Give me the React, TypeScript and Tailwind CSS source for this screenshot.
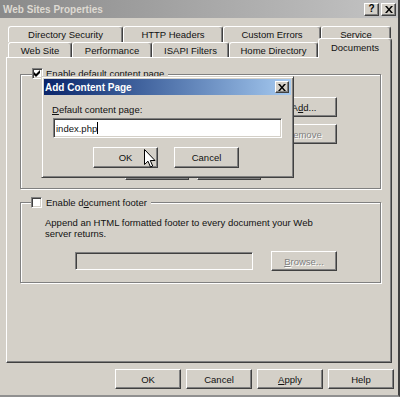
import React from 'react';

const raised =
  'bg-[#d4d0c8] border border-t-white border-l-white border-r-[#404040] border-b-[#404040] shadow-[inset_-1px_-1px_0_#808080]';
const sunken =
  'border border-t-[#808080] border-l-[#808080] border-r-white border-b-white shadow-[inset_1px_1px_0_#404040,inset_-1px_-1px_0_#d4d0c8]';
const dim = 'text-[#808080] [text-shadow:1px_1px_0_#fff]';

function Button({ className, children }: { className: string; children?: React.ReactNode }) {
  return <div className={`flex items-center justify-center ${raised} ${className}`}>{children}</div>;
}

function CheckBox({ checked }: { checked?: boolean }) {
  return (
    <div className={`w-[11px] h-[11px] bg-white flex items-center justify-center ${sunken}`}>
      {checked && (
        <svg width="7" height="7" viewBox="0 0 7 7">
          <path d="M0 2 L2 4 L6 0 L6 3 L2 7 L0 5 Z" fill="#000" />
        </svg>
      )}
    </div>
  );
}

function Tab({ label, className, selected }: { label: string; className: string; selected?: boolean }) {
  return (
    <div
      className={`${className} flex items-center justify-center bg-[#d4d0c8] border-l border-t border-r border-l-white border-t-white border-r-[#404040] rounded-tl-[3px] rounded-tr-[3px] shadow-[inset_-1px_0_0_#808080] ${
        selected ? 'relative h-[20px] -mb-[1px] pb-[2px]' : 'h-full'
      }`}
    >
      {label}
    </div>
  );
}

function CapButton({ children }: { children: React.ReactNode }) {
  return (
    <div className={`w-[15px] h-[13px] flex items-center justify-center ${raised}`}>{children}</div>
  );
}

function XGlyph() {
  return (
    <svg width="8" height="7" viewBox="0 0 8 7">
      <path d="M0 0 L2 0 L4 2.5 L6 0 L8 0 L5 3.5 L8 7 L6 7 L4 4.5 L2 7 L0 7 L3 3.5 Z" fill="#000" />
    </svg>
  );
}

function Group({
  className,
  legendClass,
  legend,
  children,
}: {
  className: string;
  legendClass: string;
  legend: React.ReactNode;
  children?: React.ReactNode;
}) {
  return (
    <div
      className={`relative border border-[#808080] shadow-[1px_1px_0_#fff,inset_1px_1px_0_#fff] ${className}`}
    >
      <div className={`absolute flex items-center bg-[#d4d0c8] pr-[4px] ${legendClass}`}>{legend}</div>
      {children}
    </div>
  );
}

export default function App() {
  return (
    <div className="relative w-[400px] h-[397px] overflow-hidden bg-[#d4d0c8] text-[#111] text-[9.5px] leading-[11px] font-['Liberation_Sans',Arial,sans-serif] border-r-2 border-b-2 border-r-[#404040] border-b-[#909090]">
      {/* title bar (inactive) */}
      <div className="h-[18px] flex items-center bg-linear-to-r from-[#8a8a8a] to-[#c4c4c4] pl-[3px] pr-[2px]">
        <span className="flex-1 font-bold text-[10px] text-[#dedad2]">Web Sites Properties</span>
        <div className="flex gap-[2px]">
          <CapButton>
            <span className="font-bold text-[10px] leading-none text-black">?</span>
          </CapButton>
          <CapButton>
            <XGlyph />
          </CapButton>
        </div>
      </div>

      {/* tabs */}
      <div className="mt-[8px] ml-[8px] flex h-[16px]">
        <Tab label="Directory Security" className="w-[115px]" />
        <Tab label="HTTP Headers" className="w-[100px]" />
        <Tab label="Custom Errors" className="w-[98px]" />
        <Tab label="Service" className="w-[70px]" />
      </div>
      <div className="ml-[8px] flex items-end h-[15px]">
        <Tab label="Web Site" className="w-[64px]" />
        <Tab label="Performance" className="w-[80px]" />
        <Tab label="ISAPI Filters" className="w-[77px]" />
        <Tab label="Home Directory" className="w-[89px]" />
        <Tab label="Documents" className="w-[74px]" selected />
      </div>

      {/* tab panel */}
      <div className="ml-[6px] w-[386px] h-[306px] border border-t-white border-l-white border-r-[#404040] border-b-[#404040] shadow-[inset_-1px_-1px_0_#808080] pt-[16px] pl-[13px]">
        <Group
          className="w-[361px] h-[115px] pt-[22px] pl-[24px]"
          legendClass="left-[11px] -top-[7px] gap-[3px]"
          legend={
            <>
              <CheckBox checked />
              <span>
                <u>E</u>nable default content page
              </span>
            </>
          }
        >
          <div className="flex">
            <div className={`w-[216px] h-[56px] bg-white ${sunken}`} />
            <div className="ml-[10px] flex flex-col gap-[7px]">
              <Button className="w-[66px] h-[20px]">
                <span>
                  A<u>d</u>d...
                </span>
              </Button>
              <Button className={`w-[66px] h-[20px] ${dim}`}>Remove</Button>
            </div>
          </div>
          <div className="mt-[7px] ml-[80px] flex gap-[8px]">
            <Button className={`w-[64px] h-[20px] ${dim}`}>Move Up</Button>
            <Button className={`w-[64px] h-[20px] ${dim}`}>Move Down</Button>
          </div>
        </Group>

        <Group
          className="mt-[13px] w-[361px] h-[81px] pt-[14px]"
          legendClass="left-[10px] -top-[6px] gap-[4px]"
          legend={
            <>
              <CheckBox />
              <span>
                Enable d<u>o</u>cument footer
              </span>
            </>
          }
        >
          <div className="pl-[24px]">
            Append an HTML formatted footer to every document your Web
            <br />
            server returns.
          </div>
          <div className="mt-[12px] pl-[54px] flex items-center h-[20px] gap-[18px]">
            <div className={`w-[178px] h-[18px] bg-[#d4d0c8] ${sunken}`} />
            <Button className={`w-[66px] h-[20px] ${dim}`}>
              <span>
                <u>B</u>rowse...
              </span>
            </Button>
          </div>
        </Group>
      </div>

      {/* dialog buttons */}
      <div className="mt-[6px] ml-[115px] flex gap-[5px]">
        <Button className="w-[66px] h-[20px]">OK</Button>
        <Button className="w-[66px] h-[20px]">Cancel</Button>
        <Button className="w-[66px] h-[20px]">
          <span>
            <u>A</u>pply
          </span>
        </Button>
        <Button className="w-[66px] h-[20px]">Help</Button>
      </div>

      {/* modal: Add Content Page */}
      <div className="absolute left-[41px] top-[76px] w-[253px] h-[102px] bg-[#d4d0c8] p-[2px] border border-t-[#d4d0c8] border-l-[#d4d0c8] border-r-[#404040] border-b-[#404040] shadow-[inset_1px_1px_0_#fff,inset_-1px_-1px_0_#808080]">
        <div className="h-[16px] flex items-center bg-linear-to-r from-[#0a246a] to-[#a6caf0] pl-[1px] pr-[2px]">
          <span className="flex-1 font-bold text-[10px] text-white">Add Content Page</span>
          <div className={`w-[14px] h-[12px] flex items-center justify-center ${raised}`}>
            <XGlyph />
          </div>
        </div>
        <div className="pl-[8px] pt-[9px]">
          <div>
            <u>D</u>efault content page:
          </div>
          <div className={`mt-[3px] ml-[1px] w-[229px] h-[20px] bg-white flex items-center pl-[2px] ${sunken}`}>
            <span>index.php</span>
            <span className="w-[1px] h-[12px] bg-black" />
          </div>
          <div className="mt-[9px] ml-[41px] flex gap-[16px]">
            <Button className="w-[65px] h-[21px]">OK</Button>
            <Button className="w-[65px] h-[21px]">Cancel</Button>
          </div>
        </div>
      </div>

      {/* mouse pointer */}
      <svg className="absolute left-[144px] top-[149px]" width="12" height="19" viewBox="0 0 12 19">
        <path
          d="M0.5 0.5 L0.5 15.5 L4 12.2 L6.5 18 L8.7 17 L6.3 11.5 L11 11.5 Z"
          fill="#fff"
          stroke="#000"
          strokeWidth="1"
          strokeLinejoin="miter"
        />
      </svg>
    </div>
  );
}
